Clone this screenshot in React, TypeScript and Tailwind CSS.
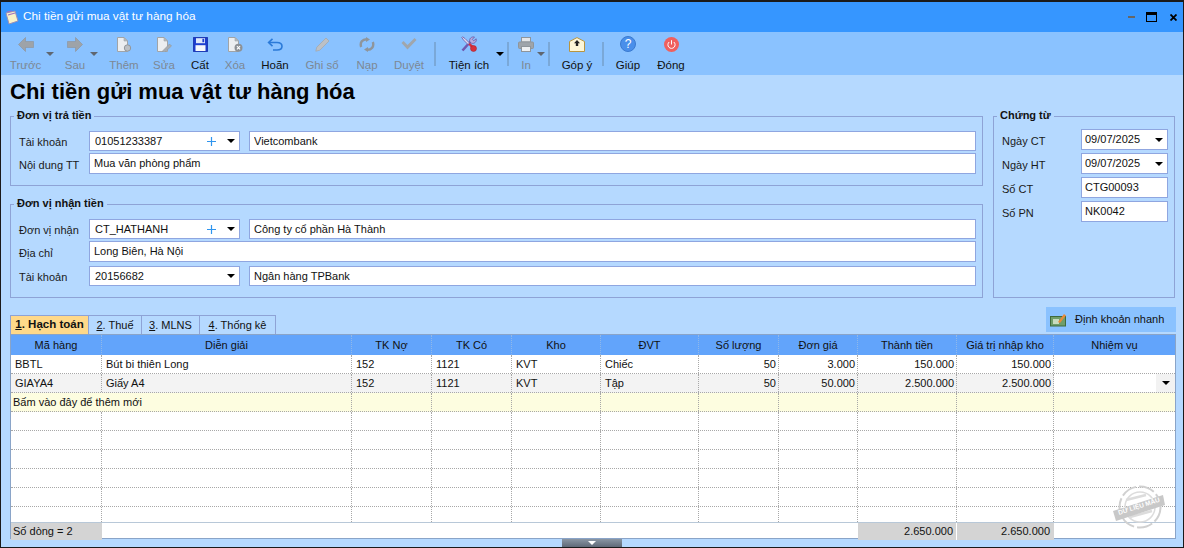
import React from 'react';

// toolbar icons
const ArrowIcon = ({ dir }: { dir: 'l' | 'r' }) => (
  <svg width="16" height="15" viewBox="0 0 16 15" className="block">
    <path d={dir === 'l' ? 'M0.5 7.5 L7.5 0.5 V4.5 H15.5 V10.5 H7.5 V14.5 Z' : 'M15.5 7.5 L8.5 0.5 V4.5 H0.5 V10.5 H8.5 V14.5 Z'} fill="#9ea3a8" stroke="#8d9298" strokeWidth="0.6" />
  </svg>
);
const DocIcon = ({ kind }: { kind: 'add' | 'edit' | 'del' }) => (
  <svg width="15" height="15" viewBox="0 0 15 15" className="block">
    <path d="M0.5 0.5 H7 L10.5 4 V14.5 H0.5 Z" fill="#eceef0" stroke="#a0a4a8" />
    <path d="M7 0.5 V4 H10.5 Z" fill="#b8bcc0" stroke="#a0a4a8" strokeWidth="0.6" />
    {kind === 'add' && <circle cx="10.5" cy="11" r="3.2" fill="#bcc0c4" stroke="#92979c" />}
    {kind === 'edit' && <path d="M6 13.5 L12.5 7 L14.5 9 L8 15 L5.5 15 Z" fill="#a8adb2" stroke="#92979c" strokeWidth="0.6" />}
    {kind === 'del' && (
      <>
        <circle cx="10.5" cy="10.8" r="4" fill="#8c9196" />
        <path d="M8.9 9.2 L12.1 12.4 M12.1 9.2 L8.9 12.4" stroke="#fff" strokeWidth="1.1" />
      </>
    )}
  </svg>
);
const SaveIcon = () => (
  <svg width="15" height="15" viewBox="0 0 15 15" className="block">
    <rect x="0.6" y="0.6" width="13.8" height="13.8" fill="#1d3fd0" stroke="#1a34b0" />
    <rect x="3" y="1.2" width="9" height="5" fill="#dfe8fa" />
    <rect x="9.4" y="1.8" width="1.8" height="3.4" fill="#1d3fd0" />
    <rect x="2.5" y="8.2" width="10" height="5.8" fill="#f6f8fc" />
  </svg>
);
const UndoIcon = () => (
  <svg width="16" height="13" viewBox="0 0 16 13" className="block" fill="none">
    <path d="M2 4.5 H10 C13 4.5 15 6 15 8.3 C15 10.6 13 12 10 12 H6" stroke="#2b7ad8" strokeWidth="1.6" />
    <path d="M5.5 0.8 L1.6 4.5 L5.5 8.2" stroke="#2b7ad8" strokeWidth="1.6" />
  </svg>
);
const PencilIcon = () => (
  <svg width="15" height="15" viewBox="0 0 15 15" className="block">
    <path d="M0.8 14.2 L1.8 10.2 L11 1 L14 4 L4.8 13.2 Z" fill="#bcc0c5" stroke="#a4a9ae" strokeWidth="0.8" />
  </svg>
);
const RefreshIcon = () => (
  <svg width="16" height="15" viewBox="0 0 16 15" className="block" fill="none">
    <path d="M2.2 10 C0.6 5.5 3.5 2 8 2.2 M13.8 5 C15.4 9.5 12.5 13 8 12.8" stroke="#8f959b" strokeWidth="2.4" />
    <path d="M7 0 L11 2.5 L7 5 Z M9 10 L5 12.5 L9 15 Z" fill="#8f959b" />
  </svg>
);
const CheckIcon = () => (
  <svg width="16" height="12" viewBox="0 0 16 12" className="block">
    <path d="M0.5 5 L2.5 3 L6.5 7 L13.5 0 L15.5 2 L6.5 11.5 Z" fill="#a0a6ac" />
  </svg>
);
const ToolsIcon = () => (
  <svg width="16" height="16" viewBox="0 0 16 16" className="block">
    <path d="M1.5 14.5 L10 5" stroke="#6f58b0" strokeWidth="2.6" fill="none" />
    <path d="M8.8 5.8 C8 2.8 10.2 0.3 13.5 1 L11.3 3.4 L12.7 4.8 L15.2 2.8 C15.8 5.8 13.4 8 10.5 7.2 Z" fill="#b9aee0" stroke="#5f4a9c" strokeWidth="0.7" />
    <path d="M1.5 0.8 L4 2.5 L8.5 7 L7 8.5 L2.5 4 L0.8 1.5 Z" fill="#ded8f0" stroke="#5f4a9c" strokeWidth="0.7" />
    <path d="M7.5 8.5 L9 7 L13.5 11 L11.5 13.5 Z" fill="#d8303c" />
    <circle cx="12.5" cy="12.5" r="3" fill="#d8303c" stroke="#a02028" strokeWidth="0.5" />
  </svg>
);
const PrintIcon = () => (
  <svg width="16" height="15" viewBox="0 0 16 15" className="block">
    <rect x="3.5" y="0.5" width="9" height="4.5" fill="#e4e6e8" stroke="#8f959b" />
    <rect x="0.5" y="5" width="15" height="6.5" rx="1" fill="#9ea4aa" stroke="#8f959b" />
    <rect x="3.5" y="9.5" width="9" height="5" fill="#eef0f2" stroke="#8f959b" />
  </svg>
);
const MailIcon = () => (
  <svg width="16" height="15" viewBox="0 0 16 15" className="block">
    <path d="M0.5 4.5 L8 0.6 L15.5 4.5 V14.5 H0.5 Z" fill="#fdf6d8" stroke="#b89540" />
    <path d="M8 3 L11 6.2 H9.2 V9 H6.8 V6.2 H5 Z" fill="#222" />
  </svg>
);
const HelpIcon = () => (
  <div className="w-[16px] h-[16px] rounded-full bg-[#4a8fea] border border-[#3a7ad0] flex items-center justify-center text-white text-[12px] leading-none">?</div>
);
const PowerIcon = () => (
  <svg width="15" height="15" viewBox="0 0 15 15" className="block" fill="none">
    <circle cx="7.5" cy="7.5" r="7.5" fill="#f0605e" />
    <path d="M5.2 5 A3.6 3.6 0 1 0 9.8 5" stroke="#fff" strokeWidth="1" />
    <path d="M7.5 3.2 V7.5" stroke="#fff" strokeWidth="1" />
  </svg>
);
const Caret = ({ muted }: { muted?: boolean }) => (
  <div className={`w-0 h-0 border-x-[4px] border-x-transparent border-t-[4px] ${muted ? 'border-t-[#5f6670]' : 'border-t-black'}`} />
);

type Tool = { label: string; icon: React.ReactNode; w: string; off?: boolean; caret?: string; sep?: string };

const TOOLS: Tool[] = [
  { label: 'Trước', icon: <ArrowIcon dir="l" />, w: 'w-[49px]', off: true, caret: '-right-[4px]' },
  { label: 'Sau', icon: <ArrowIcon dir="r" />, w: 'w-[50px]', off: true, caret: 'right-[2px]' },
  { label: 'Thêm', icon: <DocIcon kind="add" />, w: 'w-[48px]', off: true },
  { label: 'Sửa', icon: <DocIcon kind="edit" />, w: 'w-[32px]', off: true },
  { label: 'Cất', icon: <SaveIcon />, w: 'w-[40px]' },
  { label: 'Xóa', icon: <DocIcon kind="del" />, w: 'w-[30px]', off: true },
  { label: 'Hoãn', icon: <UndoIcon />, w: 'w-[50px]' },
  { label: 'Ghi sổ', icon: <PencilIcon />, w: 'w-[44px]', off: true },
  { label: 'Nạp', icon: <RefreshIcon />, w: 'w-[46px]', off: true },
  { label: 'Duyệt', icon: <CheckIcon />, w: 'w-[38px]', off: true, sep: 'ml-[6px] mr-[6px]' },
  { label: 'Tiện ích', icon: <ToolsIcon />, w: 'w-[54px]', caret: '-right-[8px]', sep: 'ml-[11px] mr-[6px]' },
  { label: 'In', icon: <PrintIcon />, w: 'w-[22px]', off: true, caret: '-right-[8px]', sep: 'ml-[11px] mr-[6px]' },
  { label: 'Góp ý', icon: <MailIcon />, w: 'w-[42px]', sep: 'ml-[4px] mr-[4px]' },
  { label: 'Giúp', icon: <HelpIcon />, w: 'w-[40px]' },
  { label: 'Đóng', icon: <PowerIcon />, w: 'w-[46px]' },
];

function ToolButton({ t }: { t: Tool }) {
  return (
    <>
      <div className={`${t.w} relative flex flex-col items-center shrink-0`}>
        <div className="h-[20px] flex items-center justify-center">{t.icon}</div>
        <div className={`mt-[4px] text-[11.5px] leading-[14px] whitespace-nowrap ${t.off ? 'text-[#7d8894]' : 'text-[#111]'}`}>{t.label}</div>
        {t.caret && <div className={`absolute top-[18px] ${t.caret}`}><Caret muted={t.off} /></div>}
      </div>
      {t.sep && <div className={`w-[2px] h-[24px] bg-[#7aa8d8] mt-[8px] shrink-0 ${t.sep}`} />}
    </>
  );
}

const Plus = () => (
  <svg width="9" height="9" viewBox="0 0 9 9" className="block mr-[11px] shrink-0">
    <path d="M4.5 0 V9 M0 4.5 H9" stroke="#2f95ee" strokeWidth="1.2" />
  </svg>
);

function Field({ children, w, h = 'h-[21px]', pl = 'pl-[4px]', combo, plus }: { children?: React.ReactNode; w: string; h?: string; pl?: string; combo?: boolean; plus?: boolean }) {
  return (
    <div className={`${w} ${h} ${pl} bg-white border border-[#8fa6e0] flex items-center pr-[4px] text-[11px] text-[#111] shrink-0`}>
      <span className="flex-1 truncate">{children}</span>
      {plus && <Plus />}
      {combo && <Caret />}
    </div>
  );
}

function Label({ children, w = 'w-[70px]', pt = 'pt-[4px]' }: { children: React.ReactNode; w?: string; pt?: string }) {
  return <div className={`${w} ${pt} text-[11px] text-[#1a1a1a] shrink-0 whitespace-nowrap`}>{children}</div>;
}

function Group({ title, className, children }: { title: string; className: string; children: React.ReactNode }) {
  return (
    <div className={`relative border border-[#8ea3d6] ${className}`}>
      <div className="absolute left-[3px] -top-[9px] bg-[#b5d9ff] px-[3px] text-[11px] font-bold leading-[14px] text-[#111] whitespace-nowrap">{title}</div>
      {children}
    </div>
  );
}

const COLS = 'grid grid-cols-[91px_250px_80px_80px_89px_98px_80px_79px_99px_97px_1fr]';
const HEADS = ['Mã hàng', 'Diễn giải', 'TK Nợ', 'TK Có', 'Kho', 'ĐVT', 'Số lượng', 'Đơn giá', 'Thành tiền', 'Giá trị nhập kho', 'Nhiệm vụ'];
const ROWS = [
  ['BBTL', 'Bút bi thiên Long', '152', '1121', 'KVT', 'Chiếc', '50', '3.000', '150.000', '150.000', ''],
  ['GIAYA4', 'Giấy A4', '152', '1121', 'KVT', 'Tập', '50', '50.000', '2.500.000', '2.500.000', ''],
];
const RIGHT = [6, 7, 8, 9];
const BLANK: string[] = Array(11).fill('');

function GridRow({ cells, bg, current, h = 'h-[19px] border-b' }: { cells: string[]; bg: string; current?: boolean; h?: string }) {
  return (
    <div className={`${COLS} ${h} ${bg} border-dotted border-[#a8a8a8]`}>
      {cells.map((c, i) => (
        <div
          key={i}
          className={`relative flex items-center text-[11px] text-[#111] ${RIGHT.includes(i) ? 'justify-end pr-[2px]' : 'px-[4px]'} ${i < 10 ? 'border-r border-dotted border-[#a8a8a8]' : ''} ${current && i === 10 ? 'bg-white' : ''}`}
        >
          {c}
          {current && i === 10 && (
            <div className="absolute right-0 top-0 h-full w-[19px] bg-[#f2f2f2] flex items-center justify-center"><Caret /></div>
          )}
        </div>
      ))}
    </div>
  );
}

export default function App() {
  return (
    <div className="font-[Liberation_Sans,Arial,sans-serif] w-[1184px] h-[548px] overflow-hidden flex flex-col border-t-2 border-x border-b border-[#1a1a1a] bg-[#b5d9ff]">
      {/* title bar */}
      <div className="h-[30px] bg-[#3696ff] flex items-center pl-[4px] pr-[6px] shrink-0">
        <svg width="14" height="15" viewBox="0 0 14 15" className="block">
          <path d="M1 3 L10 1 L13 11 L4 14 Z" fill="#f8f2c8" stroke="#9a8fb8" />
          <path d="M2 2 L7 1 M3 5 L10 3" stroke="#a070c0" strokeWidth="1.2" />
        </svg>
        <div className="ml-[4px] text-[11.8px] text-white">Chi tiền gửi mua vật tư hàng hóa</div>
        <div className="ml-auto flex items-center">
          <div className="w-[7px] h-[2px] bg-[#666]" />
          <div className="ml-[11px] w-[11px] h-[10px] border border-black border-t-[3px]" />
          <svg width="7" height="7" viewBox="0 0 7 7" className="block ml-[13px]">
            <path d="M0.5 0.5 L6.5 6.5 M6.5 0.5 L0.5 6.5" stroke="#000" strokeWidth="1.8" />
          </svg>
        </div>
      </div>
      {/* toolbar */}
      <div className="h-[43px] bg-[#8ac2ff] flex pt-[2px] shrink-0">
        {TOOLS.map(t => <ToolButton key={t.label} t={t} />)}
      </div>
      <div className="pl-[9px] pt-[4px] h-[33px] text-[22px] leading-[26px] font-bold text-black shrink-0 whitespace-nowrap">Chi tiền gửi mua vật tư hàng hóa</div>

      <div className="flex pl-[9px] pt-[8px] gap-[10px] shrink-0">
        <div className="flex flex-col gap-[18px]">
          <Group title="Đơn vị trả tiền" className="w-[973px] h-[70px] pt-[14px] pl-[8px]">
            <div className="flex">
              <Label pt="pt-[3px]">Tài khoản</Label>
              <Field w="w-[151px]" h="h-[20px]" pl="pl-[5px]" combo plus>01051233387</Field>
              <div className="w-[9px]" />
              <Field w="w-[727px]" h="h-[20px]">Vietcombank</Field>
            </div>
            <div className="flex mt-[2px]">
              <Label>Nội dung TT</Label>
              <Field w="w-[887px]">Mua văn phòng phẩm</Field>
            </div>
          </Group>
          <Group title="Đơn vị nhận tiền" className="w-[973px] h-[94px] pt-[14px] pl-[8px]">
            <div className="flex">
              <Label pt="pt-[3px]">Đơn vị nhận</Label>
              <Field w="w-[151px]" h="h-[20px]" pl="pl-[5px]" combo plus>CT_HATHANH</Field>
              <div className="w-[9px]" />
              <Field w="w-[727px]" h="h-[20px]">Công ty cổ phần Hà Thành</Field>
            </div>
            <div className="flex mt-[2px]">
              <Label>Địa chỉ</Label>
              <Field w="w-[887px]">Long Biên, Hà Nội</Field>
            </div>
            <div className="flex mt-[4px]">
              <Label pt="pt-[3px]">Tài khoản</Label>
              <Field w="w-[151px]" h="h-[20px]" pl="pl-[5px]" combo>20156682</Field>
              <div className="w-[9px]" />
              <Field w="w-[727px]" h="h-[20px]">Ngân hàng TPBank</Field>
            </div>
          </Group>
        </div>
        <Group title="Chứng từ" className="w-[182px] h-[182px] pt-[12px] pl-[8px]">
          {[
            { l: 'Ngày CT', v: '09/07/2025', c: true },
            { l: 'Ngày HT', v: '09/07/2025', c: true },
            { l: 'Số CT', v: 'CTG00093', c: false },
            { l: 'Số PN', v: 'NK0042', c: false },
          ].map(f => (
            <div key={f.l} className="flex mb-[3px]">
              <Label w="w-[79px]">{f.l}</Label>
              <Field w="w-[87px]" pl="pl-[3px]" combo={f.c}>{f.v}</Field>
            </div>
          ))}
        </Group>
      </div>

      {/* tabs + quick action */}
      <div className="flex items-end pl-[9px] pr-[7px] h-[36px] shrink-0">
        <div className="flex h-[19px] border border-b-0 border-[#8ea3d6] text-[11px] text-[#111]">
          <div className="w-[77px] bg-[#ffd98a] font-bold text-[11.5px] flex items-center justify-center whitespace-nowrap"><span><u>1</u>. Hạch toán</span></div>
          {[['2', '. Thuế', 'w-[53px]'], ['3', '. MLNS', 'w-[58px]'], ['4', '. Thống kê', 'w-[76px]']].map(([n, t, w]) => (
            <div key={n} className={`${w} border-l border-[#8ea3d6] flex items-center justify-center whitespace-nowrap`}><span><u>{n}</u>{t}</span></div>
          ))}
        </div>
        <div className="ml-auto mb-[2px] w-[130px] h-[25px] bg-[#8ac2ff] flex items-center pl-[4px] text-[11px] text-[#111] whitespace-nowrap">
          <svg width="17" height="14" viewBox="0 0 17 14" className="block">
            <rect x="0.5" y="3.5" width="15" height="9.5" fill="#6f9e6a" stroke="#3f6a3c" />
            <rect x="3" y="6" width="6" height="5" fill="#c8dcc0" />
            <path d="M8 9 L14 1 L16 2.5 L10 10 Z" fill="#e88a3a" />
          </svg>
          <span className="ml-[8px]">Định khoản nhanh</span>
        </div>
      </div>

      {/* grid */}
      <div className="ml-[9px] w-[1166px] h-[205px] border border-[#8aa4c8] bg-white flex flex-col shrink-0">
        <div className={`${COLS} h-[20px] bg-[#62a4fb]`}>
          {HEADS.map((h, i) => (
            <div key={h} className={`flex items-center justify-center text-[11px] text-[#111] whitespace-nowrap ${i < 10 ? 'border-r border-dotted border-[#8fb8ea]' : ''}`}>{h}</div>
          ))}
        </div>
        <GridRow cells={ROWS[0]} bg="bg-white" />
        <GridRow cells={ROWS[1]} bg="bg-[#f3f3f3]" current />
        <div className={`${COLS} h-[19px] bg-[#fdfde0] border-b border-dotted border-[#a8a8a8]`}>
          <div className="col-span-2 flex items-center pl-[2px] text-[11px] text-[#111] border-r border-dotted border-[#a8a8a8] whitespace-nowrap">Bấm vào đây để thêm mới</div>
          {Array.from({ length: 9 }).map((_, i) => (
            <div key={i} className={i < 8 ? 'border-r border-dotted border-[#a8a8a8]' : ''} />
          ))}
        </div>
        {Array.from({ length: 5 }).map((_, r) => <GridRow key={r} cells={BLANK} bg="bg-white" />)}
        <GridRow cells={BLANK} bg="bg-white" h="flex-1" />
        <div className={`${COLS} relative h-[16px] border-t border-[#b8c8d8] text-[11px] text-[#111]`}>
          <div className="bg-[#d4d4d4] flex items-center pl-[2px] whitespace-nowrap">Số dòng = 2</div>
          <div className="col-span-7" />
          <div className="bg-[#d4d4d4] border-r border-white flex items-center justify-end pr-[3px]">2.650.000</div>
          <div className="bg-[#d4d4d4] flex items-center justify-end pr-[4px]">2.650.000</div>
          <div />
          {/* stamp */}
          <svg width="54" height="44" viewBox="0 0 54 44" className="absolute right-[9px] -top-[38px] block" fill="none">
            <circle cx="28" cy="22" r="20.5" stroke="#d0d0d0" strokeWidth="2" strokeDasharray="16 3" />
            <circle cx="28" cy="22" r="15" stroke="#dcdcdc" strokeWidth="1.5" />
            <path d="M14 15 L34 10 M18 32 L40 26" stroke="#dcdcdc" strokeWidth="2.5" />
            <path d="M1 26 L51 10 L53 20 L4 36 Z" fill="#c8c8c8" />
            <text x="7" y="30" fontSize="6.5" fontWeight="700" fill="#fff" transform="rotate(-18 7 30)">DỮ LIỆU MẪU</text>
          </svg>
        </div>
      </div>
      {/* collapse handle */}
      <div className="ml-[561px] w-[60px] flex-1 bg-gradient-to-b from-[#8a96a4] to-[#5f6a78] flex justify-center pt-[2px]">
        <div className="w-0 h-0 border-x-[4px] border-x-transparent border-t-[4px] border-t-white" />
      </div>
    </div>
  );
}
